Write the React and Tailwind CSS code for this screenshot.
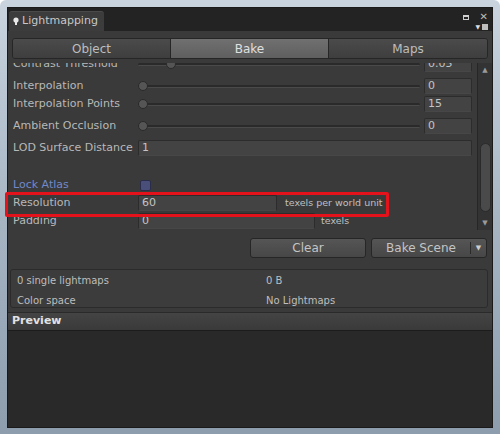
const font = { fontFamily: '"DejaVu Sans", Verdana, sans-serif' };

function Field({ value, className = "" }) {
  return (
    <div
      className={
        "h-[16px] bg-[#434343] border border-[#2c2c2c] border-b-[#474747] rounded-[2px] pl-[3px] text-[11px] leading-[14px] text-[#c4c4c4] " +
        className
      }
    >
      {value}
    </div>
  );
}

function Slider({ pos = 0 }) {
  return (
    <div className="relative flex-1 h-[18px] flex items-center">
      <div className="w-full h-[3px] bg-[#2a2a2a] border-b border-[#4a4a4a] rounded-full" />
      <div
        className="absolute top-[4px] w-[10px] h-[10px] rounded-full bg-[#555] border border-[#2a2a2a]"
        style={{ left: pos }}
      />
    </div>
  );
}

function Row({ label, children, className = "", labelClass = "text-[#b8b8b8]" }) {
  return (
    <div className={"flex items-center h-[18px] " + className}>
      <div className={"w-[125px] shrink-0 text-[11px] whitespace-nowrap " + labelClass}>{label}</div>
      {children}
    </div>
  );
}

function SliderRow({ label, value, pos, className }) {
  return (
    <Row label={label} className={className}>
      <Slider pos={pos} />
      <Field value={value} className="w-[48px] ml-[4px] shrink-0" />
    </Row>
  );
}

function Scrollbar() {
  return (
    <div className="w-[15px] shrink-0 ml-[5px] bg-[#333] border-l border-[#262626] flex flex-col items-center pt-[2px] pb-[2px]">
      <div className="text-[7px] leading-[10px] text-[#9a9a9a]">▲</div>
      <div className="flex-1 w-full relative">
        <div className="absolute left-[2px] right-[1px] top-[68px] h-[69px] rounded-[6px] bg-[#4a4a4a] border border-[#2a2a2a]" />
      </div>
      <div className="text-[7px] leading-[10px] text-[#9a9a9a]">▼</div>
    </div>
  );
}

export default function App() {
  return (
    <div
      className="relative w-[500px] h-[434px] overflow-hidden rounded-t-[6px] bg-gradient-to-b from-[#c9d4df] via-[#a7b5c3] to-[#8d9dae] pt-[7px] pl-[7px] pr-[7px] pb-[6px]"
      style={font}
    >
      <div className="w-full h-full flex flex-col bg-[#282828] border border-[#1a1a1a]">
        {/* tab strip */}
        <div className="relative h-[23px] shrink-0 bg-[#232323] flex items-end pl-[1px]">
          <div className="h-[20px] w-[95px] bg-[#3c3c3c] rounded-t-[3px] border-t border-[#4a4a4a] flex items-center pl-[4px] gap-[3px] text-[11px] text-[#c8c8c8]">
            <svg width="6" height="9" viewBox="0 0 6 9">
              <circle cx="3" cy="3" r="2.6" fill="#e8e8e8" />
              <rect x="2" y="5" width="2" height="3" fill="#e8e8e8" />
            </svg>
            Lightmapping
          </div>
          <div className="absolute right-[4px] top-[4px] flex flex-col items-end">
            <div className="flex items-center gap-[11px]">
              <div className="w-[6px] h-[5px] border border-[#cfcfcf] border-t-2" />
              <div className="text-[10px] leading-[10px] text-[#bbb]">✕</div>
            </div>
            <div className="flex items-center gap-[2px] mt-[2px]">
              <div className="text-[6px] leading-[6px] text-[#ddd]">▼</div>
              <div className="w-[6px] h-[6px] bg-[#bdbdbd]" />
            </div>
          </div>
        </div>

        {/* panel */}
        <div className="flex flex-col bg-[#3a3a3a] pt-[7px]">
          <div className="flex mx-[4px] h-[21px] rounded-[3px] border border-[#262626] overflow-hidden text-[12px]">
            <div className="w-[158px] flex items-center justify-center bg-gradient-to-b from-[#4b4b4b] to-[#3e3e3e] text-[#bdbdbd] border-r border-[#262626]">
              Object
            </div>
            <div className="w-[158px] flex items-center justify-center bg-gradient-to-b from-[#707070] to-[#5f5f5f] text-[#e0e0e0] border-r border-[#262626]">
              Bake
            </div>
            <div className="flex-1 flex items-center justify-center bg-gradient-to-b from-[#4b4b4b] to-[#3e3e3e] text-[#bdbdbd]">
              Maps
            </div>
          </div>

          {/* scroll region, content scrolled so the first row is half hidden */}
          <div className="flex h-[167px] mt-[4px] pl-[5px]">
            <div className="flex-1 overflow-hidden">
              <div className="mt-[-8px]">
                <SliderRow label="Contrast Threshold" value="0.05" pos={28} />
                <SliderRow label="Interpolation" value="0" pos={0} className="mt-[4px]" />
                <SliderRow label="Interpolation Points" value="15" pos={0} />
                <SliderRow label="Ambient Occlusion" value="0" pos={0} className="mt-[4px]" />
                <Row label="LOD Surface Distance" className="mt-[4px]">
                  <Field value="1" className="flex-1" />
                </Row>
                <Row label="Lock Atlas" className="mt-[19px]" labelClass="text-[#7189c9]">
                  <div className="w-[11px] h-[11px] rounded-[2px] bg-[#4a4f7a] border border-[#2a2d4a] ml-[2px]" />
                </Row>
                <Row label="Resolution">
                  <Field value="60" className="w-[139px]" />
                  <div className="ml-[8px] text-[9.5px] text-[#c0c0c0] whitespace-nowrap">texels per world unit</div>
                </Row>
                <Row label="Padding">
                  <Field value="0" className="w-[177px]" />
                  <div className="ml-[6px] text-[9.5px] text-[#c0c0c0]">texels</div>
                </Row>
              </div>
            </div>
            <Scrollbar />
          </div>

          {/* buttons */}
          <div className="flex justify-end gap-[5px] pr-[5px] mt-[8px] text-[12px] text-[#c4c4c4]">
            <div className="w-[116px] h-[20px] rounded-[3px] border border-[#262626] bg-gradient-to-b from-[#555] to-[#474747] flex items-center justify-center">
              Clear
            </div>
            <div className="w-[116px] h-[20px] rounded-[3px] border border-[#262626] bg-gradient-to-b from-[#555] to-[#474747] flex items-center">
              <div className="flex-1 text-center">Bake Scene</div>
              <div className="w-px h-[12px] bg-[#2a2a2a]" />
              <div className="w-[15px] text-center text-[7px] text-[#ccc]">▼</div>
            </div>
          </div>

          {/* info box */}
          <div className="ml-[2px] mt-[11px] mb-[4px] w-[478px] h-[39px] rounded-[3px] border border-[#2b2b2b] bg-[#3c3c3c] flex flex-col justify-center gap-[5px] pt-[3px] px-[6px] text-[10px] text-[#bebebe]">
            <div className="flex">
              <div className="w-[249px]">0 single lightmaps</div>
              <div>0 B</div>
            </div>
            <div className="flex">
              <div className="w-[249px]">Color space</div>
              <div>No Lightmaps</div>
            </div>
          </div>
        </div>

        {/* preview header */}
        <div className="h-[19px] shrink-0 bg-gradient-to-b from-[#444] to-[#3a3a3a] border-t border-[#2a2a2a] border-b border-b-[#1c1c1c] flex items-center pl-[4px] text-[11px] font-bold text-[#e2e2e2]">
          Preview
        </div>
        <div className="flex-1 bg-[#292929]" />
      </div>

      {/* annotation */}
      <div className="absolute left-[5px] top-[192px] w-[384px] h-[25px] border-[3px] border-[#e3121b] rounded-[2px]" />
    </div>
  );
}
